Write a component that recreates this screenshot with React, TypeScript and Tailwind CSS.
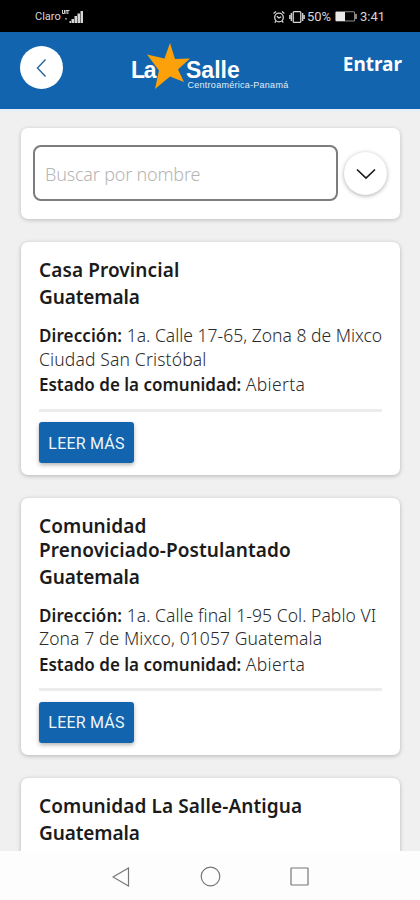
import { ReactNode } from "react";

interface ICommunity {
  name: ReactNode;
  country: string;
  address?: ReactNode[];
  status?: string;
}

const communities: ICommunity[] = [
  {
    name: "Casa Provincial",
    country: "Guatemala",
    address: [
      <span>1a. Calle 17-65, Zona 8 de Mixco</span>,
      <span className="tracking-[0.15px]">Ciudad San Cristóbal</span>,
    ],
    status: "Abierta",
  },
  {
    name: (
      <>
        Comunidad
        <br />
        Prenoviciado-Postulantado
      </>
    ),
    country: "Guatemala",
    address: [
      <span className="tracking-[0.05px]">
        1a. Calle final 1-95 Col. Pablo VI
      </span>,
      <span className="tracking-[0.1px]">Zona 7 de Mixco, 01057 Guatemala</span>,
    ],
    status: "Abierta",
  },
  { name: "Comunidad La Salle-Antigua", country: "Guatemala" },
];

const StatusBar = () => (
  <div className="flex h-8 shrink-0 items-center justify-between bg-black pl-[35px] pr-[35px] pt-px font-['Roboto',sans-serif] text-[#d6d6d6]">
    <div className="flex items-center">
      <span className="text-[11px] leading-4">Claro</span>
      <svg width="23" height="14" viewBox="0 0 23 14" fill="currentColor">
        <path
          d="M1.500 0v3.500h2V0M5 0v4M5 .5h3.500M6.800.5V4"
          fill="none"
          stroke="currentColor"
        />
        <path d="M4 8h2v1.500H4z" fill="#888" />
        <path d="M8.500 11H10v2H8.500zM10.500 9H13v4h-2.500zM13.500 6H16v7h-2.500zM16.500 3.500H19V13h-2.500zM19.500 1H22v12h-2.500z" />
      </svg>
    </div>
    <div className="flex items-center">
      <svg
        width="12"
        height="14"
        viewBox="0 0 12 14"
        fill="none"
        stroke="currentColor"
        strokeWidth="1.3"
      >
        <circle cx="6" cy="7.5" r="4.3" />
        <path d="M.6 3.4 3 1.6M11.4 3.4 9 1.6M3.8 6.2 6 8l2.2-1.2M2.8 11l-1 1.6M9.2 11l1 1.6" />
      </svg>
      <svg
        className="ml-1"
        width="16"
        height="14"
        viewBox="0 0 16 14"
        fill="none"
        stroke="currentColor"
        strokeWidth="1.3"
      >
        <rect x="4.2" y="1.6" width="7.6" height="10.8" rx="1" />
        <path d="M2.3 3v8M.8 5v4M13.7 3v8M15.2 5v4" />
      </svg>
      <span className="ml-0.5 text-[13px] leading-4 tracking-[-0.1px]">
        50%
      </span>
      <svg className="ml-1" width="23" height="11" viewBox="0 0 23 11">
        <rect
          x=".6"
          y=".8"
          width="19"
          height="9.2"
          rx="1"
          fill="none"
          stroke="#8a8a8a"
          strokeWidth="1.1"
        />
        <rect x="1" y="1" width="9" height="9" fill="#e8e8e8" />
        <path d="M21 3v5" stroke="#bbb" strokeWidth="1.4" />
      </svg>
      <span className="ml-0.5 text-[13px] leading-4">3:41</span>
    </div>
  </div>
);

const Logo = () => (
  <svg width="164" height="52" viewBox="0 0 164 52">
    <text
      x="3"
      y="34.500"
      fill="#fff"
      fontFamily="Liberation Sans, sans-serif"
      fontWeight="700"
      fontSize="23"
      letterSpacing="-1.4"
    >
      La
    </text>
    <path
      d="M42 0 47 16 62 15.500 50 26.500 56 39 42 33.500 27 46 31 27.500 19 11.500 36.500 15.500Z"
      fill="#fda10a"
    />
    <text
      x="58"
      y="34.500"
      fill="#fff"
      fontFamily="Liberation Sans, sans-serif"
      fontWeight="700"
      fontSize="23"
      letterSpacing="0"
    >
      Salle
    </text>
    <text
      x="59.500"
      y="44.800"
      fill="#e2eef9"
      fontFamily="Liberation Sans, sans-serif"
      fontSize="9"
      letterSpacing=".27"
    >
      Centroamérica-Panamá
    </text>
  </svg>
);

const Header = () => (
  <header className="flex h-[79px] shrink-0 items-start border-b-2 border-[#e2effb] bg-[#1164ad] bg-clip-padding pl-5 pr-[18px]">
    <button className="mt-3.5 flex size-[43px] items-center justify-center rounded-full bg-white">
      <svg width="12" height="20" viewBox="0 0 12 20" fill="none">
        <path d="M9.500 1.500 1.500 10l8 8.500" stroke="#2f6c9f" strokeWidth="1.5" />
      </svg>
    </button>
    <div className="ml-[65px] mt-[11px]">
      <Logo />
    </div>
    <span className="ml-auto mt-[18px] text-[19px] font-bold leading-7 text-white">
      Entrar
    </span>
  </header>
);

const SearchBox = () => (
  <div className="flex h-[91px] shrink-0 items-start rounded-[7px] bg-white px-3 pt-[17px] shadow-[0_1px_4px_rgba(0,0,0,0.22)]">
    <input
      className="h-14 w-[305px] rounded-lg border-2 border-[#7d7d7d] px-2.5 pt-0.5 text-[18px] font-light tracking-[-0.2px] text-[#666] placeholder:text-[#b5b5b5]"
      type="text"
      placeholder="Buscar por nombre"
      aria-label="Nombre"
    />
    <button className="ml-1.5 mt-[7px] flex size-[43px] items-center justify-center rounded-full bg-white shadow-[0_1px_4px_rgba(0,0,0,0.32)]">
      <svg width="20" height="12" viewBox="0 0 20 12" fill="none">
        <path d="m1 1.500 9 8.500 9-8.500" stroke="#1c1c1c" strokeWidth="1.7" />
      </svg>
    </button>
  </div>
);

const CommunityCard = ({ name, country, address, status }: ICommunity) => (
  <article className="shrink-0 rounded-[7px] bg-white px-[18px] pb-3 pt-[17px] shadow-[0_1px_4px_rgba(0,0,0,0.25)]">
    <h2 className="text-[19px] font-semibold leading-[23.5px] tracking-[0.1px] text-[#1b1b1b]">
      {name}
    </h2>
    <h3 className="mt-[2.5px] text-[19px] font-semibold leading-6 tracking-[-0.1px] text-[#1b1b1b]">
      {country}
    </h3>
    {address && (
      <>
        <div className="mt-[15px] whitespace-nowrap text-[17.5px] font-light leading-[23.5px] text-[#2b2b2b]">
          <p>
            <b className="text-[17px] font-semibold tracking-[0.1px] text-[#1b1b1b]">
              Dirección:
            </b>{" "}
            {address[0]}
          </p>
          <p>{address[1]}</p>
          <p className="mt-0.5">
            <b className="text-[17px] font-semibold text-[#1b1b1b]">
              Estado de la comunidad:
            </b>{" "}
            <span className="tracking-[0.35px]">{status}</span>
          </p>
        </div>
        <hr className="mt-3 border-t-[3px] border-[#ececec]" />
        <button className="mt-[10.5px] flex h-[41px] w-[95px] items-center justify-center rounded-[3px] bg-[#1164ad] pt-0.5 font-['Roboto',sans-serif] text-[16px] tracking-[0.2px] text-[#eef5fb] shadow-[0_2px_4px_rgba(0,0,0,0.3)]">
          LEER MÁS
        </button>
      </>
    )}
  </article>
);

const NavigationBar = () => (
  <nav className="flex h-[49px] shrink-0 items-center bg-[#fdfdfd] pl-28 pt-0.5">
    <svg width="18" height="20" viewBox="0 0 18 20" fill="none" stroke="#777">
      <path d="M1 10 16.500 1v18Z" strokeWidth="1.2" />
    </svg>
    <svg
      className="ml-[70px]"
      width="21"
      height="21"
      viewBox="0 0 21 21"
      fill="none"
      stroke="#777"
    >
      <circle cx="10.500" cy="10.500" r="9.300" strokeWidth="1.2" />
    </svg>
    <svg
      className="ml-[69px]"
      width="19"
      height="19"
      viewBox="0 0 19 19"
      fill="none"
      stroke="#777"
    >
      <rect x="1" y="1" width="17" height="17" rx=".5" strokeWidth="1.2" />
    </svg>
  </nav>
);

export default function App() {
  return (
    <div className="flex h-[900px] w-[420px] flex-col overflow-hidden bg-[#f0f0f0] font-['Noto_Sans',sans-serif]">
      <StatusBar />
      <Header />
      <main className="flex min-h-0 flex-1 flex-col gap-[23px] overflow-hidden pl-[21px] pr-5 pt-[17px]">
        <SearchBox />
        {communities.map((community, index) => (
          <CommunityCard key={index} {...community} />
        ))}
      </main>
      <NavigationBar />
    </div>
  );
}
